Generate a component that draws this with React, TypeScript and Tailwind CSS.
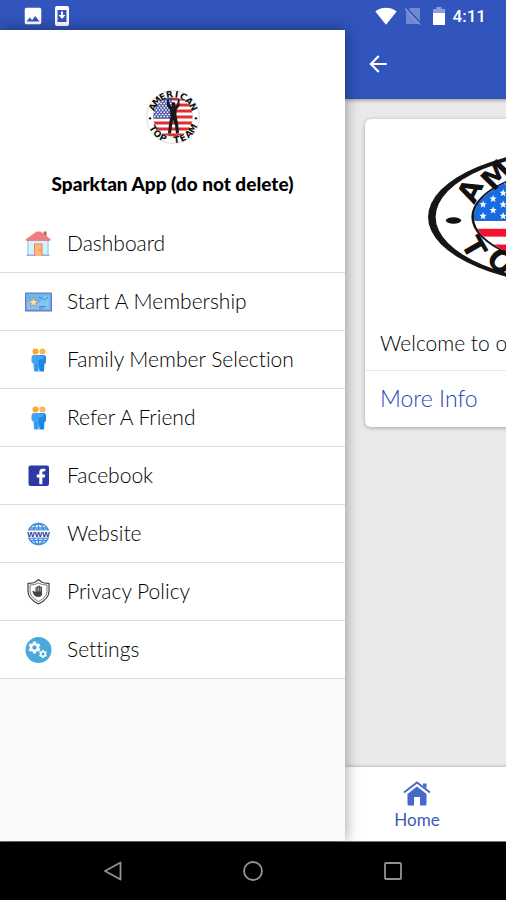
import type { ReactNode } from "react";
import { FaFacebookF } from "react-icons/fa";
import { MdArrowBack, MdImage, MdSettings, MdSignalWifi4Bar } from "react-icons/md";

const starPoints = (cx: number, cy: number, r: number) =>
  [...Array(10)]
    .map((_, i) => {
      const radius = i % 2 === 0 ? r : r * 0.42;
      const angle = (i * Math.PI) / 5;
      return `${cx + radius * Math.sin(angle)},${cy - radius * Math.cos(angle)}`;
    })
    .join(" ");

type TeamLogoProps = {
  id: string;
  rx: number;
  ry: number;
  fontSize: number;
  blue: string;
  red: string;
  ring: string;
};

// Round team badge. rx and ry differ when it fills a wide banner.
function TeamLogo({ id, rx, ry, fontSize, blue, red, ring }: TeamLogoProps) {
  const innerX = rx * 0.73;
  const innerY = ry * 0.72;
  const stripe = (innerY * 2) / 13;
  const letters = [
    ...[..."AMERICAN"].map((char, i) => ({ char, angle: -64 + i * 18.3, side: -1 })),
    ...[..."TOP TEAM"].map((char, i) => ({ char, angle: -60 + i * 17.2, side: 1 })),
  ];

  return (
    <svg
      width={rx * 2}
      height={ry * 2}
      viewBox={`${-rx} ${-ry} ${rx * 2} ${ry * 2}`}
      className="block shrink-0"
      role="img"
      aria-label="American Top Team"
    >
      <defs>
        <clipPath id={id}>
          <ellipse rx={innerX} ry={innerY} />
        </clipPath>
      </defs>
      <ellipse rx={rx} ry={ry} fill={ring} />
      <ellipse rx={rx * 0.955} ry={ry * 0.955} fill="#fff" />
      <ellipse rx={innerX + rx * 0.015} ry={innerY + ry * 0.02} fill={ring} />
      <g clipPath={`url(#${id})`}>
        <rect x={-innerX} y={-innerY} width={innerX * 2} height={innerY * 2} fill="#fff" />
        {[0, 2, 4, 6, 8, 10, 12].map((i) => (
          <rect key={i} x={-innerX} y={-innerY + i * stripe} width={innerX * 2} height={stripe} fill={red} />
        ))}
        <rect x={-innerX} y={-innerY} width={innerX} height={stripe * 7} fill={blue} />
        {[...Array(8)].map((_, row) =>
          [...Array(6)].map((_, col) => (
            <polygon
              key={`${row}-${col}`}
              points={starPoints(
                -rx * 0.676 + col * rx * 0.118 + (row % 2) * rx * 0.059,
                -ry * 0.014 - row * ry * 0.081,
                ry * 0.055
              )}
              fill="#fff"
            />
          ))
        )}
      </g>
      {/* Fighter with raised arms */}
      <g transform={`scale(${rx / 27} ${ry / 27})`}>
        <path
          d="M-6-17-4.500-18-3-12-1-10-1.500-13 0-15 2-14.500 2-11 4-12 5-18 6.500-17.500 6.500-11 3.500-7 3.500-1 5 6 6 16 3 16.500 2 8 0 3-1 9-2 16.500-5 16.500-4 7-2.500-1-3-7-6-11Z"
          fill="#16181c"
        />
      </g>
      <ellipse cx={-rx * 0.85} cy={ry * 0.05} rx={rx * 0.045} ry={ry * 0.045} fill="#111" />
      <ellipse cx={rx * 0.85} cy={ry * 0.05} rx={rx * 0.045} ry={ry * 0.045} fill="#111" />
      {letters.map(({ char, angle, side }, i) => {
        const rad = (angle * Math.PI) / 180;
        const x = rx * 0.84 * Math.sin(rad);
        const y = side * ry * 0.85 * Math.cos(rad);
        return (
          <text
            key={i}
            transform={`translate(${x} ${y}) rotate(${side === -1 ? angle : -angle})`}
            textAnchor="middle"
            dy="0.36em"
            fontSize={fontSize}
            fill="#111"
            className="font-['DejaVu_Sans'] font-bold"
          >
            {char}
          </text>
        );
      })}
    </svg>
  );
}

function Icon({ children }: { children: ReactNode }) {
  return (
    <svg viewBox="0 0 28 28" className="size-7 shrink-0" aria-hidden="true">
      {children}
    </svg>
  );
}

function HouseIcon() {
  return (
    <Icon>
      <path d="M19.500 1.500h3v8h-3z" fill="#a66c55" />
      <path d="M3 10h22v15.500H3z" fill="#d5f1fb" />
      <path d="M3 10h2v15H3zM23 10h2v15h-2z" fill="#b3def0" />
      <path d="M2.500 24.500h23V26h-23z" fill="#83b7e6" />
      <path d="M12.500 1.500h4L27 9.500 25.500 11H2.500L1.500 9.500Z" fill="#ef7f85" />
      <path d="M10 13.500h8.500V26H10z" fill="#d58b60" />
      <path d="M11 14.500h6.500V26H11z" fill="#ffb57c" />
      <circle cx="16" cy="20" r=".7" fill="#a66c55" />
    </Icon>
  );
}

function MembershipIcon() {
  return (
    <Icon>
      <rect x="1" y="4.500" width="27" height="19" rx="1" fill="#7471b8" />
      <rect x="2.200" y="5.700" width="24.600" height="16.500" fill="#68b9f1" />
      <path d="M3 15q4-5 8-1t7-3 7-1v11H3Z" fill="#7cc7f5" />
      <polygon points={starPoints(9.5, 14.5, 5.5)} fill="#ffdfa0" stroke="#ae8479" strokeWidth=".8" />
      <path d="m15 9 2 1.500L19 9m0 2 2 1 3-3M5 9l1.500 1M15 18.500h7M15 20h5" stroke="#527cb9" fill="none" strokeWidth=".9" />
    </Icon>
  );
}

function PeopleIcon() {
  return (
    <Icon>
      <circle cx="11.500" cy="5.500" r="3" fill="#ffa726" />
      <circle cx="18.500" cy="5.500" r="3" fill="#ffb74d" />
      <path d="M9.500 9h6v8l-1 8.500H10L9.500 18l-2-2v-4.500q0-2.500 2-2.500Z" fill="#42a5f5" />
      <path d="M14.500 9h5Q22 9 22 12v5l-1.500 1-.5 7.500h-4.500l-1-8Z" fill="#1e88e5" />
      <path d="M12.500 9.500h7v3l-5 1.500Z" fill="#42a5f5" />
      <path d="M12.300 18v7M17.800 18v7" stroke="#1976d2" strokeWidth=".7" />
    </Icon>
  );
}

function FacebookIcon() {
  return (
    <Icon>
      <rect x="4.500" y="3.500" width="20.500" height="20.500" rx="2" fill="#2d3aa5" />
      <FaFacebookF x="9" y="6.500" size={16} color="#fff" />
    </Icon>
  );
}

function WebsiteIcon() {
  return (
    <Icon>
      <g fill="none" stroke="#3f8edb" strokeWidth="1.300">
        <circle cx="14.500" cy="14" r="10.500" />
        <ellipse cx="14.500" cy="14" rx="5.500" ry="10.500" />
        <path d="M14.500 3.500v21M6 8h17M4.500 10h20M4.500 18h20M6 20.500h17" />
      </g>
      <path d="M3 10.500h23v7H3z" fill="#fff" />
      <text
        x="14.500"
        y="17"
        textAnchor="middle"
        fontSize="8"
        fill="#283593"
        className="font-['Liberation_Sans'] font-bold"
      >
        WWW
      </text>
    </Icon>
  );
}

function PrivacyIcon() {
  return (
    <Icon>
      <g fill="none" stroke="#444" strokeWidth="1.200" strokeLinejoin="round">
        <path d="M14.500 1.500 17.500 4q3 1.500 7.500 1.300v8q0 7.500-10.500 12.700Q4 20.800 4 13.300v-8Q8.500 5.500 11.500 4Z" />
        <path d="M14.500 5q3.500 2 8.500 2v6.500q0 5.500-8.500 10Q6 19 6 13.500V7q5 0 8.500-2Z" strokeWidth=".7" />
      </g>
      <path
        d="M11.500 14V9.500q.8-.8 1.500 0V8.400q.8-.8 1.600 0v-.5q.9-.8 1.700 0v1q.9-.8 1.700 0V16q0 3-3.500 3t-4.500-2l-1.700-3.500q.7-1 1.700-.2Z"
        fill="#444"
      />
      <path d="M13 10v3.500M14.600 9v4.500M16.300 9.500v4" stroke="#fff" strokeWidth=".5" />
    </Icon>
  );
}

function SettingsIcon() {
  return (
    <Icon>
      <circle cx="14.500" cy="14" r="13" fill="#48a9dc" />
      <MdSettings x="3" y="4" size={15} color="#fff" />
      <MdSettings x="14" y="13" size={10} color="#fff" />
    </Icon>
  );
}

const menuItems = [
  { label: "Dashboard", icon: HouseIcon },
  { label: "Start A Membership", icon: MembershipIcon },
  { label: "Family Member Selection", icon: PeopleIcon },
  { label: "Refer A Friend", icon: PeopleIcon },
  { label: "Facebook", icon: FacebookIcon },
  { label: "Website", icon: WebsiteIcon },
  { label: "Privacy Policy", icon: PrivacyIcon },
  { label: "Settings", icon: SettingsIcon },
];

function StatusBar() {
  return (
    <div className="flex h-[30px] shrink-0 items-center justify-between bg-[#3154bd] pt-0.5 pr-5 pl-[22px] text-white">
      <div className="flex items-center gap-[11px]">
        <MdImage className="size-[22px]" />
        <svg viewBox="0 0 14 20" className="h-5 w-3.5" aria-hidden="true">
          <rect width="14" height="20" rx="2" fill="#fff" />
          <path d="M2.500 4h9v12h-9z" fill="#3154bd" />
          <path d="M6 5.500h2V9h2.500L7 13 3.500 9H6Z" fill="#fff" />
        </svg>
      </div>
      <div className="flex items-center">
        <MdSignalWifi4Bar className="size-[22px]" />
        <svg viewBox="0 0 16 18" className="ml-2 h-[18px] w-4" aria-hidden="true">
          <path d="M5 1h10v16H1V5Z" fill="#7189d2" />
          <path d="m1 1 15 16" stroke="#3154bd" strokeWidth="2.500" />
          <path d="m0 1.500 15 16" stroke="#8da0da" strokeWidth="1.200" />
        </svg>
        <svg viewBox="0 0 12 18" className="ml-3 h-[18px] w-3" aria-hidden="true">
          <path d="M3.500 0h5v2H12v5H0V2h3.500Z" fill="#8c9fdb" />
          <path d="M0 6h12v12H0z" fill="#fff" />
        </svg>
        <span className="ml-2 font-['Roboto',sans-serif] text-[17px] leading-none font-medium">4:11</span>
      </div>
    </div>
  );
}

function Drawer() {
  return (
    <aside className="z-10 flex w-[345px] shrink-0 flex-col bg-[#fafafa] shadow-[0_0_14px_rgba(0,0,0,0.4)]">
      <div className="flex h-[185px] flex-col items-center bg-white pt-[60px]">
        <TeamLogo id="drawer-flag" rx={27} ry={27} fontSize={9} blue="#3c4ba0" red="#e02c2e" ring="#e3e3e3" />
        <h1 className="mt-7 text-[19px] leading-6 font-black text-black">Sparktan App (do not delete)</h1>
      </div>
      <nav>
        <ul>
          {menuItems.map(({ label, icon: MenuIcon }) => (
            <li key={label}>
              <a
                href="#"
                className="flex h-[58px] items-center gap-[15px] border-b border-[#dcdcdc] bg-white pl-6 text-[21px] font-light text-black"
              >
                <MenuIcon />
                <span className="pb-0.5">{label}</span>
              </a>
            </li>
          ))}
        </ul>
      </nav>
    </aside>
  );
}

function Page() {
  return (
    <div className="flex min-w-0 flex-1 overflow-hidden">
      {/* The page keeps its full width and slides out behind the drawer */}
      <div className="flex w-screen shrink-0 flex-col bg-[#ebe9ea]">
        <header className="z-[1] flex h-[69px] shrink-0 items-center bg-[#3154bd] px-5 pb-0.5 shadow-[0_1px_4px_rgba(0,0,0,0.4)]">
          <button type="button" aria-label="Back" className="text-white">
            <MdArrowBack className="size-[26px]" />
          </button>
        </header>
        <main className="flex-1 p-5">
          <article className="overflow-hidden rounded-md bg-white shadow-[0_1px_4px_rgba(0,0,0,0.3)]">
            <div className="flex h-[196px] items-center justify-center">
              <TeamLogo id="banner-flag" rx={170} ry={71} fontSize={29} blue="#176be0" red="#f4102f" ring="#151515" />
            </div>
            <p className="h-14 border-b border-[#e8e8e8] px-[15px] pt-3.5 text-[21px] leading-7 font-light text-black">
              Welcome to our app
            </p>
            <div className="flex h-14 items-center px-[15px]">
              <a href="#" className="pb-0.5 text-[23px] font-light text-[#2447b5]">
                More Info
              </a>
            </div>
          </article>
        </main>
        <footer className="flex h-[74px] shrink-0 bg-white shadow-[0_-1px_3px_rgba(0,0,0,0.2)]">
          <button type="button" className="flex w-36 flex-col items-center justify-center gap-0.5 pt-1 text-[17px] leading-6 text-[#3b59ba]">
            <svg viewBox="0 0 28 26" className="h-[26px] w-7" aria-hidden="true">
              <path d="m1 12.500 13-10 13 10" fill="none" stroke="#4667cb" strokeWidth="1.800" />
              <path d="M20 3.500h3.500v5L20 6z" fill="#4667cb" />
              <path d="m14 6.500 9.500 7.500V24q0 1.500-1.500 1.500h-5V17h-6v8.500H6Q4.500 25.500 4.500 24V14Z" fill="#4667cb" />
            </svg>
            Home
          </button>
        </footer>
      </div>
    </div>
  );
}

function SystemNav() {
  return (
    <div className="flex h-[59px] shrink-0 items-center justify-center gap-[120px] border-t border-[#777] bg-black">
      <button type="button" aria-label="System back">
        <svg viewBox="0 0 20 20" className="size-5" fill="none" stroke="#929292" strokeWidth="1.800">
          <path d="M17.500 1.500v17L2 10Z" strokeLinejoin="round" />
        </svg>
      </button>
      <button type="button" aria-label="System home">
        <svg viewBox="0 0 20 20" className="size-5" fill="none" stroke="#929292" strokeWidth="1.800">
          <circle cx="10" cy="10" r="9" />
        </svg>
      </button>
      <button type="button" aria-label="Recent apps">
        <svg viewBox="0 0 20 20" className="size-5" fill="none" stroke="#929292" strokeWidth="1.800">
          <rect x="2" y="2" width="16" height="16" rx="1" />
        </svg>
      </button>
    </div>
  );
}

export default function App() {
  return (
    <div className="flex min-h-screen flex-col overflow-hidden font-['Lato',sans-serif] [font-variant-ligatures:none]">
      <StatusBar />
      <div className="flex flex-1">
        <Drawer />
        <Page />
      </div>
      <SystemNav />
    </div>
  );
}
